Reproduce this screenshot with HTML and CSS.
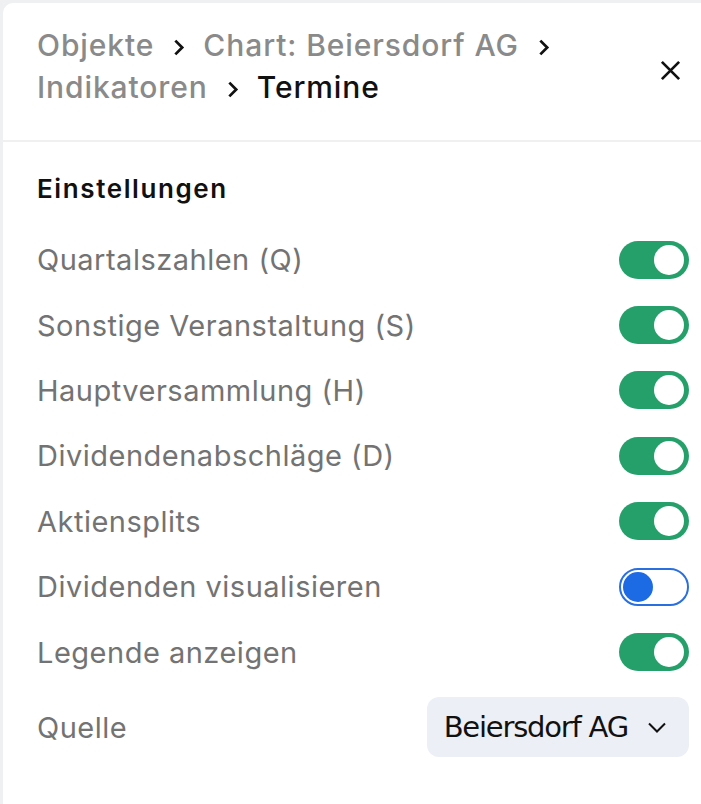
FILE: index.html
```html
<!DOCTYPE html>
<html lang="de">
<head>
  <meta charset="UTF-8" />
  <meta name="viewport" content="width=device-width, initial-scale=1.0"/>
  <title>Termine</title>
  <link rel="stylesheet" href="styles.css">
</head>
<body>
  <div class="panel">
    <header class="panel-header">
      <nav class="crumbs">
        <span class="crumb">Objekte</span>
        <svg class="sep" viewBox="0 0 12 18"><path d="M3 2.5l6.5 6.5-6.5 6.5" /></svg>
        <span class="crumb">Chart: Beiersdorf AG</span>
        <svg class="sep" viewBox="0 0 12 18"><path d="M3 2.5l6.5 6.5-6.5 6.5" /></svg>
        <span class="crumb">Indikatoren</span>
        <svg class="sep" viewBox="0 0 12 18"><path d="M3 2.5l6.5 6.5-6.5 6.5" /></svg>
        <span class="crumb current">Termine</span>
      </nav>
      <button class="close" type="button" aria-label="Schließen">
        <svg viewBox="0 0 24 24"><path d="M3 3l18 18M21 3L3 21" /></svg>
      </button>
    </header>

    <section class="settings">
      <h2>Einstellungen</h2>
      <div class="row">
        <span class="label">Quartalszahlen (Q)</span>
        <span class="toggle on"><span class="knob"></span></span>
      </div>
      <div class="row">
        <span class="label">Sonstige Veranstaltung (S)</span>
        <span class="toggle on"><span class="knob"></span></span>
      </div>
      <div class="row">
        <span class="label">Hauptversammlung (H)</span>
        <span class="toggle on"><span class="knob"></span></span>
      </div>
      <div class="row">
        <span class="label">Dividendenabschläge (D)</span>
        <span class="toggle on"><span class="knob"></span></span>
      </div>
      <div class="row">
        <span class="label">Aktiensplits</span>
        <span class="toggle on"><span class="knob"></span></span>
      </div>
      <div class="row">
        <span class="label">Dividenden visualisieren</span>
        <span class="toggle off"><span class="knob"></span></span>
      </div>
      <div class="row">
        <span class="label">Legende anzeigen</span>
        <span class="toggle on"><span class="knob"></span></span>
      </div>
      <div class="row source">
        <span class="label">Quelle</span>
        <button class="select" type="button">
          Beiersdorf AG
          <svg viewBox="0 0 20 11"><path d="M2 1.5l8 8 8-8" /></svg>
        </button>
      </div>
    </section>
  </div>
</body>
</html>
```

FILE: styles.css
```css
html, body {
  height: 100%;
  margin: 0;
  padding: 0;
  overflow: hidden;
}

body {
  background-color: #eff0f2;
  font-family: Inter, "Noto Sans", sans-serif;
}

.panel {
  margin: 3px 0 0 3px;
  height: calc(100% - 3px);
  background-color: #fff;
  border-top-left-radius: 10px;
}

.panel-header {
  display: flex;
  align-items: center;
  padding: 21px 14px 32px 34px;
  border-bottom: 2px solid #f0f0f1;
}

.crumbs {
  flex: 1;
  max-width: 570px;
  display: flex;
  flex-wrap: wrap;
  align-items: center;
  column-gap: 18px;
  font-size: 30px;
  font-weight: 500;
  line-height: 42px;
  letter-spacing: 0.9px;
  color: #8a8a8a;
}

.crumb.current {
  color: #111;
}

.sep {
  width: 13px;
  height: 19px;
  fill: none;
  stroke: #111;
  stroke-width: 2.6;
  margin-top: 4px;
}

.close {
  margin-left: auto;
  margin-top: 8px;
  background: none;
  border: none;
  padding: 5px;
  cursor: pointer;
}

.close svg {
  display: block;
  width: 23px;
  height: 23px;
  fill: none;
  stroke: #111;
  stroke-width: 2.8;
}

.settings {
  padding: 31px 12px 0 34px;
}

h2 {
  margin: 0 0 22px;
  font-size: 26px;
  font-weight: 600;
  line-height: 32px;
  color: #111;
  letter-spacing: 1.6px;
}

.row {
  display: flex;
  align-items: center;
  justify-content: space-between;
  height: 65.4px;
}

.label {
  font-size: 29px;
  color: #737373;
  letter-spacing: 0.5px;
}

.toggle {
  position: relative;
  box-sizing: border-box;
  width: 70px;
  height: 38px;
  border-radius: 19px;
}

.toggle.on {
  background-color: #26a06a;
}

.toggle.off {
  background-color: #fff;
  border: 2px solid #2a6fe0;
}

.knob {
  position: absolute;
  top: 4px;
  right: 5px;
  width: 30px;
  height: 30px;
  border-radius: 50%;
  background-color: #fff;
}

.toggle.off .knob {
  top: 2px;
  left: 2px;
  right: auto;
  background-color: #1d6ae5;
}

.row.source {
  margin-top: 10px;
}

.select {
  display: flex;
  align-items: center;
  gap: 19px;
  height: 60px;
  padding: 0 22px 0 17px;
  border: none;
  border-radius: 12px;
  background-color: #eceff6;
  font-family: "DejaVu Sans", sans-serif;
  font-size: 29px;
  color: #111;
  letter-spacing: -1.2px;
}

.select svg {
  width: 20px;
  height: 11px;
  fill: none;
  stroke: #111;
  stroke-width: 2;
}
```
